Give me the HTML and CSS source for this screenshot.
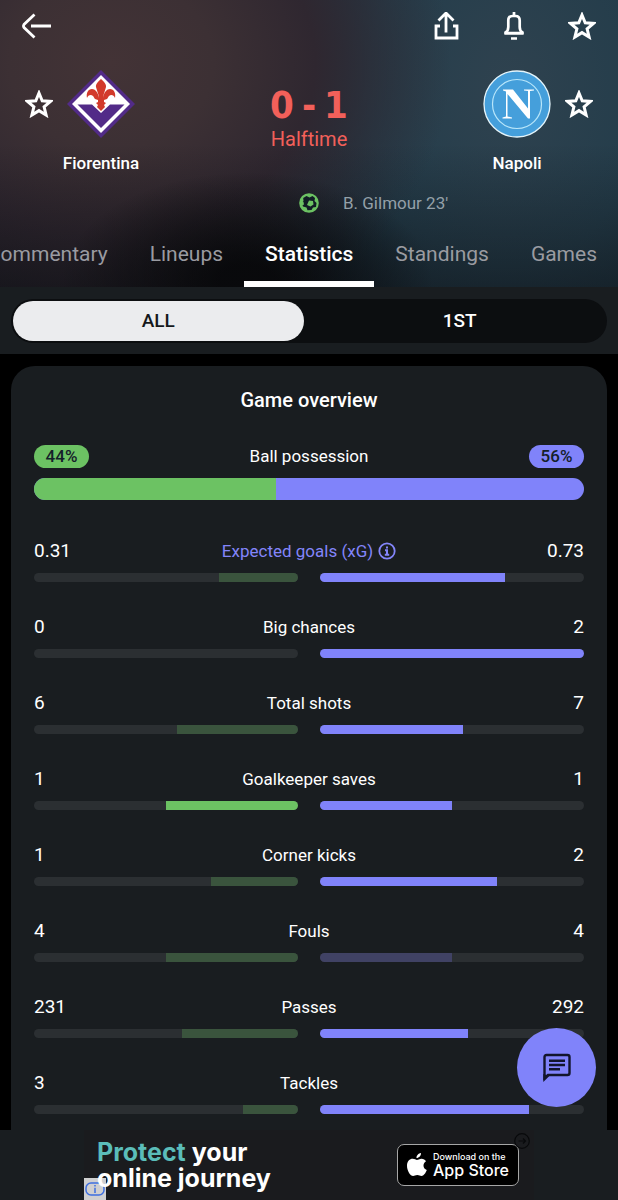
FILE: index.html
```html
<!DOCTYPE html>
<html lang="en">
<head>
    <meta charset="UTF-8">
    <meta name="viewport" content="width=device-width, initial-scale=1.0">
    <title>Fiorentina - Napoli</title>
    <link rel="stylesheet" href="styles.css">
</head>

<body>
    <!-- Match header -->
    <header class="match-header">
        <div class="toolbar">
            <button class="icon-button back" aria-label="Back">
                <svg width="30" height="28" viewBox="0 0 30 28" fill="none" stroke="#fff" stroke-width="2.8"><path d="M12.500 2.500 2 12.500q-1 1.500 0 3L12.500 25.500M9 14h20"/></svg>
            </button>
            <button class="icon-button" aria-label="Share">
                <svg width="28" height="28" viewBox="0 0 28 28" fill="none" stroke="#fff" stroke-width="2.800"><path d="M14 20.500V1.500M6.500 8.500 14 1l7.500 7.500M8 14H4v12h21V14h-4"/></svg>
            </button>
            <button class="icon-button" aria-label="Notifications">
                <svg width="28" height="28" viewBox="0 0 28 28" fill="none" stroke="#fff" stroke-width="2.700"><path d="M14 0v4M8.300 15V8.500q0-4.500 4.200-4.500h3q4.200 0 4.200 4.500V15q0 4 2.800 5.500V21h-17v-.5q2.800-1.500 2.800-5.500zM4.500 21.300h19M11 26.500h6"/></svg>
            </button>
            <button class="icon-button" aria-label="Add to favourites">
                <svg width="28" height="28" viewBox="0 0 28 28" fill="none" stroke="#fff" stroke-width="3"><path d="m14 3 3.200 7.800 8.300.6-6.400 5.400 2 8.200-7.100-4.400L6.900 25l2-8.200-6.400-5.400 8.300-.6z"/></svg>
            </button>
        </div>

        <div class="teams">
            <div class="team">
                <button class="team-star" aria-label="Follow Fiorentina">
                    <svg width="28" height="28" viewBox="0 0 28 28" fill="none" stroke="#fff" stroke-width="3"><path d="m14 3 3.200 7.800 8.300.6-6.400 5.400 2 8.200-7.100-4.400L6.900 25l2-8.200-6.400-5.400 8.300-.6z"/></svg>
                </button>
                <div class="club">
                    <svg width="68" height="68" viewBox="0 0 68 68">
                        <path fill="#522b88" d="M34 0 68 34 34 68 0 34z"/>
                        <path fill="#fff" d="M34 5 63 34 34 63 5 34z"/>
                        <path fill="#522b88" d="M10.500 34.500H25l9 8.500 9-8.500h14.500L34 58z"/>
                        <path fill="#d23a2b" d="M34 9c3 3 5.500 5 5 8-1 4-3 8-3 11 1-6 4-9 7-9 4 0 6 4 5 9-1-3-4-4-6-2-1 1-1 2-2 3l-3 1v2l2 1-2 2 1 2-4 4-4-4 1-2-2-2 2-1v-2l-3-1c-1-1-1-2-2-3-2-2-5-1-6 2-1-5 1-9 5-9 3 0 6 3 7 9 0-3-2-7-3-11-.5-3 2-5 5-8z"/>
                    </svg>
                    <span class="club-name">Fiorentina</span>
                </div>
            </div>

            <div class="score">
                <div class="score-value"><span>0</span><span>-</span><span>1</span></div>
                <div class="score-state">Halftime</div>
            </div>

            <div class="team away">
                <div class="club">
                    <svg width="68" height="68" viewBox="0 0 68 68">
                        <circle cx="34" cy="34" r="33" fill="#459fdb" stroke="#e4f5fc" stroke-width="1.300"/>
                        <circle cx="34" cy="34" r="24.500" fill="none" stroke="#b8e6fa" stroke-width="1.200"/>
                        <path fill="#fff" d="M20 19.500h10l15 19V21l-4-.6v-.9h10v.9l-4 .6v27.500h-2L24.500 24v22.500l4.500 1v1h-9.500v-1l3.500-1V21.500l-3-1z"/>
                    </svg>
                    <span class="club-name">Napoli</span>
                </div>
                <button class="team-star" aria-label="Follow Napoli">
                    <svg width="28" height="28" viewBox="0 0 28 28" fill="none" stroke="#fff" stroke-width="3"><path d="m14 3 3.200 7.800 8.300.6-6.400 5.400 2 8.200-7.100-4.400L6.900 25l2-8.200-6.400-5.400 8.300-.6z"/></svg>
                </button>
            </div>
        </div>

        <div class="goal">
            <svg class="goal-ball" width="20" height="20" viewBox="0 0 20 20">
                <circle cx="10" cy="10" r="9.800" fill="#6cc263"/>
                <path fill="#111d25" d="m7.500 3 3 1.500 3-1.500 2.500 2-.5 3 2 2-.5 4-3 .5-1.500 2.500-4 .3-1-2.800-3.500-1-1.300-3.500L4.500 8l-.3-3z"/>
                <path fill="#6cc263" d="m10 7.500 4 .5.500 3.500-3 2-3.500-1.500zM2 8l2.500 1 .5 2.500L2 13z"/>
            </svg>
            <span class="goal-text">B. Gilmour 23'</span>
        </div>

        <nav class="tabs">
            <button class="tab">Commentary</button>
            <button class="tab">Lineups</button>
            <button class="tab active">Statistics</button>
            <button class="tab">Standings</button>
            <button class="tab">Games</button>
        </nav>
    </header>

    <!-- Period switch -->
    <div class="period">
        <div class="period-track">
            <button class="period-button selected">ALL</button>
            <button class="period-button">1ST</button>
        </div>
    </div>

    <!-- Statistics -->
    <main class="content">
        <section class="card">
            <h2 class="card-title">Game overview</h2>

            <div class="possession">
                <div class="stat-head">
                    <span class="pill home">44%</span>
                    <span class="stat-name">Ball possession</span>
                    <span class="pill guest">56%</span>
                </div>
                <div class="possession-bar">
                    <div class="possession-fill" style="width: 44%"></div>
                </div>
            </div>

            <div class="stat">
                <div class="stat-head">
                    <span class="value">0.31</span>
                    <button class="stat-name stat-link">Expected goals (xG)
                        <svg width="18" height="18" viewBox="0 0 18 18" fill="none" stroke="#8385fa" stroke-width="1.800"><circle cx="9" cy="9" r="7.700"/><path stroke-width="2" d="M9 4.500v2M7 8.200h2V13M6.800 12.800h4.400"/></svg>
                    </button>
                    <span class="value">0.73</span>
                </div>
                <div class="bars">
                    <div class="bar left"><div class="fill dim" style="width: 30%"></div></div>
                    <div class="bar"><div class="fill" style="width: 70%"></div></div>
                </div>
            </div>

            <div class="stat">
                <div class="stat-head">
                    <span class="value">0</span>
                    <span class="stat-name">Big chances</span>
                    <span class="value">2</span>
                </div>
                <div class="bars">
                    <div class="bar left"><div class="fill dim" style="width: 0%"></div></div>
                    <div class="bar"><div class="fill" style="width: 100%"></div></div>
                </div>
            </div>

            <div class="stat">
                <div class="stat-head">
                    <span class="value">6</span>
                    <span class="stat-name">Total shots</span>
                    <span class="value">7</span>
                </div>
                <div class="bars">
                    <div class="bar left"><div class="fill dim" style="width: 46%"></div></div>
                    <div class="bar"><div class="fill" style="width: 54%"></div></div>
                </div>
            </div>

            <div class="stat">
                <div class="stat-head">
                    <span class="value">1</span>
                    <span class="stat-name">Goalkeeper saves</span>
                    <span class="value">1</span>
                </div>
                <div class="bars">
                    <div class="bar left"><div class="fill" style="width: 50%"></div></div>
                    <div class="bar"><div class="fill" style="width: 50%"></div></div>
                </div>
            </div>

            <div class="stat">
                <div class="stat-head">
                    <span class="value">1</span>
                    <span class="stat-name">Corner kicks</span>
                    <span class="value">2</span>
                </div>
                <div class="bars">
                    <div class="bar left"><div class="fill dim" style="width: 33%"></div></div>
                    <div class="bar"><div class="fill" style="width: 67%"></div></div>
                </div>
            </div>

            <div class="stat">
                <div class="stat-head">
                    <span class="value">4</span>
                    <span class="stat-name">Fouls</span>
                    <span class="value">4</span>
                </div>
                <div class="bars">
                    <div class="bar left"><div class="fill dim" style="width: 50%"></div></div>
                    <div class="bar"><div class="fill dim" style="width: 50%"></div></div>
                </div>
            </div>

            <div class="stat">
                <div class="stat-head">
                    <span class="value">231</span>
                    <span class="stat-name">Passes</span>
                    <span class="value">292</span>
                </div>
                <div class="bars">
                    <div class="bar left"><div class="fill dim" style="width: 44%"></div></div>
                    <div class="bar"><div class="fill" style="width: 56%"></div></div>
                </div>
            </div>

            <div class="stat">
                <div class="stat-head">
                    <span class="value">3</span>
                    <span class="stat-name">Tackles</span>
                    <span class="value"></span>
                </div>
                <div class="bars">
                    <div class="bar left"><div class="fill dim" style="width: 21%"></div></div>
                    <div class="bar"><div class="fill" style="width: 79%"></div></div>
                </div>
            </div>
        </section>

        <!-- Floating chat button -->
        <button class="chat" aria-label="Chat">
            <svg width="30" height="30" viewBox="0 0 30 30" fill="none" stroke="#12152c" stroke-width="2.400"><path d="M2.500 25V4q0-2 2-2h21q2 0 2 2v16q0 2-2 2H6z"/><path d="M7 7.800h16M7 12h16M7 16.300h11"/><path fill="#12152c" stroke="none" d="M1.300 21v8l6-6z"/></svg>
        </button>
    </main>

    <!-- Ad banner -->
    <footer class="ad">
        <div class="ad-inner">
            <p class="ad-text"><span class="accent">Protect</span> your<br>online journey</p>
            <a class="store" href="#">
                <svg width="20" height="24" viewBox="0 0 20 24" fill="#fff"><path d="M14 0c.2 2.500-1.900 5-4.500 5C9.300 2.600 11.500.3 14 0zM10 7c1 0 2.400-1.300 4.600-1.300 1.900 0 3.500 1 4.400 2.500-3.800 2.400-3.100 7.300.8 8.800-1 2.800-3.100 6-5.300 6-1.600 0-2.200-1-4.200-1s-2.700 1-4.200 1C3.500 23 0 18 0 12.700 0 8.400 2.700 5.800 5.700 5.800 7.500 5.800 9 7 10 7z"/></svg>
                <span class="store-text"><small>Download on the</small>App Store</span>
            </a>
            <button class="ad-close" aria-label="Skip ad">
                <svg width="16" height="16" viewBox="0 0 16 16" fill="none" stroke="#08090b" stroke-width="1.200"><circle cx="8" cy="8" r="7.300"/><path d="M4.500 8h7M9 5.500 11.500 8 9 10.500"/></svg>
            </button>
            <button class="ad-info" aria-label="Ad information">
                <svg width="20" height="14" viewBox="0 0 20 14" fill="none" stroke="#3e6fe0" stroke-width="1.500"><rect x="1" y="1" width="18" height="12" rx="5"/><path d="M10 3v1.500M10 5.800V11"/></svg>
            </button>
        </div>
    </footer>
</body>
</html>
```
FILE: styles.css
```css
* {
    box-sizing: border-box;
}
body {
    margin: 0;
    height: 100vh;
    display: flex;
    flex-direction: column;
    overflow: hidden;
    background-color: #000;
    color: #fff;
    font-family: Roboto, "Liberation Sans", sans-serif;
    font-size: 17px;
    line-height: 24px;
}
button {
    padding: 0;
    border: none;
    background: none;
    color: inherit;
    font: inherit;
    cursor: pointer;
}
svg {
    display: block;
    flex-shrink: 0;
}

/* Match header */
.match-header {
    flex-shrink: 0;
    background:
        linear-gradient(to bottom, rgba(10, 10, 13, 0) 50%, rgba(10, 10, 13, 0.45) 100%),
        radial-gradient(ellipse 30% 38% at 40% 98%, #08090b 15%, rgba(8, 9, 11, 0) 100%),
        radial-gradient(ellipse 55% 100% at 18% 22%, #433336 0%, #3c3034 30%, #2f2730 60%, rgba(30, 28, 37, 0) 100%),
        radial-gradient(ellipse 50% 140% at 82% 30%, #2f424f 0%, #243d4b 45%, #1d323f 75%, rgba(27, 36, 46, 0) 100%),
        #1c1e27;
}
.toolbar {
    display: flex;
    align-items: center;
    gap: 40px;
    height: 52px;
    padding: 0 22px;
}
.toolbar .back {
    margin-right: auto;
}
.teams {
    display: grid;
    grid-template-columns: 1fr auto 1fr;
    padding: 18px 25px 0;
}
.team {
    display: flex;
    align-items: flex-start;
    gap: 6px;
}
.team.away {
    justify-content: flex-end;
}
.team-star {
    display: flex;
    align-items: center;
    height: 68px;
}
.club {
    display: flex;
    flex-direction: column;
    align-items: center;
    gap: 13px;
    width: 84px;
}
.club-name {
    font-weight: 500;
}
.score {
    padding-top: 15px;
    text-align: center;
    color: #f2605a;
}
.score-value {
    display: flex;
    justify-content: center;
    gap: 8px;
    font-family: "DejaVu Sans Condensed", "DejaVu Sans", sans-serif;
    font-stretch: condensed;
    font-weight: bold;
    font-size: 38px;
    line-height: 40px;
}
.score-state {
    font-size: 20px;
    line-height: 28px;
}
.goal {
    display: grid;
    grid-template-columns: 1fr auto 1fr;
    align-items: center;
    gap: 24px;
    margin-top: 16px;
    color: #94a0a8;
}
.goal-ball {
    grid-column: 2;
}

/* Tabs */
.tabs {
    display: flex;
    justify-content: flex-end;
    height: 72px;
    overflow: hidden;
}
.tab {
    flex-shrink: 0;
    padding: 0 21px;
    border-top: 12px solid transparent;
    border-bottom: 6px solid transparent;
    font-size: 21px;
    color: #9a9ba1;
}
.tab.active {
    border-bottom-color: #fff;
    color: #fff;
    font-weight: 500;
}

/* Period switch */
.period {
    flex-shrink: 0;
    padding: 12px 11px 11px;
    background-color: #191d20;
}
.period-track {
    display: flex;
    gap: 11px;
    height: 44px;
    padding: 2px;
    border-radius: 22px;
    background-color: #0c0e10;
}
.period-button {
    flex: 1;
    border-radius: 20px;
    font-size: 19px;
    font-weight: 500;
}
.period-button.selected {
    background-color: #ebecee;
    color: #15181b;
}

/* Statistics card */
.content {
    position: relative;
    flex: 1;
    min-height: 0;
    padding: 12px 11px 0;
    overflow: hidden;
}
.card {
    padding: 22px 23px;
    border-radius: 24px;
    background-color: #191d20;
}
.card-title {
    margin: 0 0 32px;
    font-size: 20px;
    font-weight: 500;
    line-height: 24px;
    text-align: center;
}
.possession {
    margin-bottom: 39px;
}
.stat {
    margin-bottom: 33px;
}
.stat-head {
    display: grid;
    grid-template-columns: 1fr auto 1fr;
    align-items: center;
    height: 24px;
    margin-bottom: 10px;
}
.stat-head > :last-child {
    justify-self: end;
}
.stat-link {
    display: flex;
    align-items: center;
    gap: 5px;
    color: #8385fa;
}
.value {
    font-size: 19px;
}
.pill {
    justify-self: start;
    width: 55px;
    border-radius: 12px;
    font-weight: 500;
    line-height: 23px;
    text-align: center;
    color: #15202a;
}
.pill.home {
    background-color: #6cc263;
}
.pill.guest {
    background-color: #8083fa;
}
.possession-bar {
    height: 22px;
    border-radius: 11px;
    background-color: #8083fa;
    overflow: hidden;
}
.possession-fill {
    height: 100%;
    background-color: #6cc263;
}
.bars {
    display: flex;
    gap: 22px;
}
.bar {
    display: flex;
    flex: 1;
    height: 9px;
    border-radius: 5px;
    background-color: #2b2f32;
    overflow: hidden;
}
.bar.left {
    justify-content: flex-end;
}
.fill {
    background-color: #8083fa;
}
.fill.dim {
    background-color: #404264;
}
.left .fill {
    background-color: #6cc263;
}
.left .fill.dim {
    background-color: #3a543d;
}

/* Floating chat button */
.chat {
    position: absolute;
    right: 22px;
    bottom: 23px;
    display: flex;
    align-items: center;
    justify-content: center;
    width: 79px;
    height: 79px;
    border-radius: 50%;
    background-color: #8083fa;
}

/* Ad banner */
.ad {
    flex-shrink: 0;
    display: flex;
    justify-content: center;
    background-color: #191d20;
}
.ad-inner {
    position: relative;
    display: flex;
    align-items: center;
    justify-content: space-between;
    width: 450px;
    height: 70px;
    padding: 0 15px 0 13px;
    background-color: #1a1b1e;
}
.ad-text {
    position: relative;
    z-index: 1;
    margin: 0;
    font-family: Inter, sans-serif;
    font-size: 25px;
    font-weight: 700;
    line-height: 26px;
}
.accent {
    color: #5bbdb9;
}
.store {
    display: flex;
    align-items: center;
    gap: 6px;
    width: 122px;
    height: 42px;
    padding-left: 9px;
    border: 1px solid #a6a6a6;
    border-radius: 7px;
    background-color: #000;
    color: #fff;
    text-decoration: none;
}
.store-text {
    font-family: Inter, sans-serif;
    font-size: 16px;
    font-weight: 500;
    line-height: 16px;
}
.store-text small {
    display: block;
    font-size: 9px;
    line-height: 10px;
}
.ad-close {
    position: absolute;
    top: 3px;
    right: 4px;
}
.ad-info {
    position: absolute;
    left: 0;
    bottom: 0;
    display: flex;
    align-items: center;
    justify-content: center;
    width: 22px;
    height: 22px;
    background-color: #cfd0d1;
}
```
